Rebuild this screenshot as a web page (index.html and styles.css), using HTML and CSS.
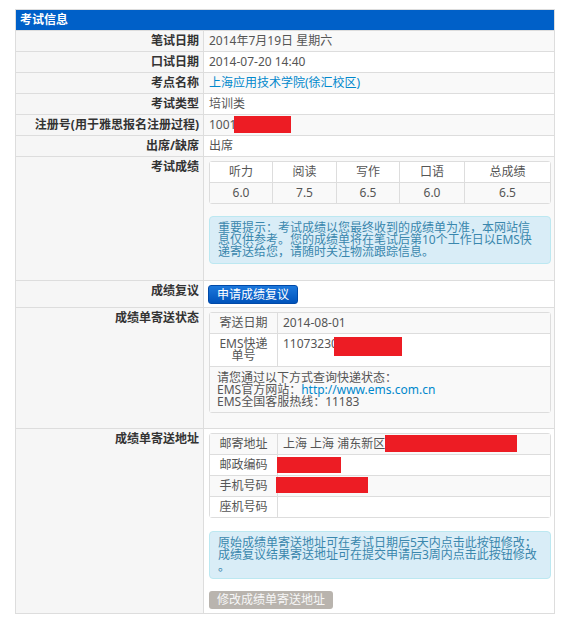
FILE: index.html
```html
<!DOCTYPE html>
<html lang="zh-CN">
<head>
<meta charset="utf-8">
<title>考试信息</title>
<link rel="stylesheet" href="styles.css">
</head>
<body>
<table class="panel">
  <colgroup><col class="c1"><col class="c2"></colgroup>
  <tr><th class="panel-head" colspan="2">考试信息</th></tr>
  <tr class="odd"><th class="lbl">笔试日期</th><td class="val">2014年7月19日 星期六</td></tr>
  <tr><th class="lbl">口试日期</th><td class="val">2014-07-20 14:40</td></tr>
  <tr class="odd"><th class="lbl">考点名称</th><td class="val"><a class="link" href="#">上海应用技术学院(徐汇校区)</a></td></tr>
  <tr><th class="lbl">考试类型</th><td class="val">培训类</td></tr>
  <tr class="odd"><th class="lbl">注册号(用于雅思报名注册过程)</th><td class="val">1001<span class="redact r-reg"></span></td></tr>
  <tr><th class="lbl">出席/缺席</th><td class="val">出席</td></tr>
  <tr class="odd"><th class="lbl">考试成绩</th>
    <td class="val">
      <table class="grid scores">
        <thead>
          <tr class="first"><th class="s1">听力</th><th class="s2">阅读</th><th class="s3">写作</th><th class="s4">口语</th><th>总成绩</th></tr>
        </thead>
        <tbody>
          <tr class="odd"><td>6.0</td><td>7.5</td><td>6.5</td><td>6.0</td><td>6.5</td></tr>
        </tbody>
      </table>
      <div class="alert">重要提示：考试成绩以您最终收到的成绩单为准，本网站信<br>息仅供参考。您的成绩单将在笔试后第10个工作日以EMS快<br>递寄送给您，请随时关注物流跟踪信息。</div>
    </td>
  </tr>
  <tr><th class="lbl">成绩复议</th><td class="val btn-cell"><a class="btn-primary" href="#">申请成绩复议</a></td></tr>
  <tr class="odd"><th class="lbl">成绩单寄送状态</th>
    <td class="val">
      <table class="grid info status">
        <tr class="odd first"><td class="k">寄送日期</td><td class="v">2014-08-01</td></tr>
        <tr><td class="k">EMS快递<br>单号</td><td class="v">11073230<span class="redact r-ems"></span></td></tr>
        <tr class="odd"><td class="note" colspan="2">请您通过以下方式查询快递状态：<br>EMS官方网站：<a class="link" href="#">http://www.ems.com.cn</a><br>EMS全国客服热线：11183</td></tr>
      </table>
    </td>
  </tr>
  <tr><th class="lbl">成绩单寄送地址</th>
    <td class="val">
      <table class="grid info address">
        <tr class="odd first"><td class="k">邮寄地址</td><td class="v">上海 上海 浦东新区<span class="redact r-addr"></span></td></tr>
        <tr><td class="k">邮政编码</td><td class="v"><span class="redact r-zip"></span></td></tr>
        <tr class="odd"><td class="k">手机号码</td><td class="v"><span class="redact r-phone"></span></td></tr>
        <tr><td class="k">座机号码</td><td class="v"></td></tr>
      </table>
      <div class="alert alert-2">原始成绩单寄送地址可在考试日期后5天内点击此按钮修改；<br>成绩复议结果寄送地址可在提交申请后3周内点击此按钮修改<br>。</div>
      <a class="btn-gray" href="#">修改成绩单寄送地址</a>
    </td>
  </tr>
</table>
</body>
</html>
```

FILE: styles.css
```css
html, body {
  background: #fff;
}
body {
  margin: 0;
  padding: 9px 0 0 15px;
  font-family: "Noto Sans", "Noto Sans CJK SC", sans-serif;
  font-size: 12px;
  line-height: 12px;
  color: #555;
}

.panel {
  width: 540px;
  border: 1px solid #ddd;
  border-collapse: separate;
  border-spacing: 0;
  table-layout: fixed;
}
.c1 { width: 188px; }
.c2 { width: 350px; }

.panel-head {
  background: #0060c8;
  color: #fff;
  font-weight: bold;
  text-align: left;
  padding: 4px 4px;
  line-height: 12px;
}

.lbl {
  box-sizing: border-box;
  border-top: 1px solid #ddd;
  border-right: 1px solid #ddd;
  background: #f6f6f6;
  text-align: right;
  vertical-align: top;
  padding: 4px 4px;
  font-weight: bold;
  color: #333;
  white-space: nowrap;
}
.val {
  border-top: 1px solid #ddd;
  padding: 4px 3px 4px 5px;
  vertical-align: top;
  text-align: left;
  background: #fff;
}
.panel > tbody > tr.odd > .val { background: #f9f9f9; }
.btn-cell { padding-bottom: 3px; }

.link {
  color: #0088cc;
  text-decoration: none;
}

/* inner bordered tables */
.grid {
  width: 342px;
  border: 1px solid #ddd;
  border-radius: 3px;
  border-collapse: separate;
  border-spacing: 0;
  table-layout: fixed;
  background: #fff;
}
.grid th, .grid td {
  box-sizing: border-box;
  border-left: 1px solid #ddd;
  border-top: 1px solid #ddd;
  padding: 4px 5px;
  line-height: 12px;
  font-weight: normal;
  color: #555;
  vertical-align: top;
  background: #fff;
}
.grid tr > :first-child { border-left: 0; }
.grid tr.first > * { border-top: 0; }
.grid tr.odd > * { background: #f9f9f9; }

.scores { margin-bottom: 12px; }
.scores th, .scores td { text-align: center; }
.s1 { width: 62px; }
.s2 { width: 64px; }
.s3 { width: 63px; }
.s4 { width: 65px; }

.info .k { width: 67px; text-align: center; }
.info .v { text-align: left; white-space: nowrap; }
.info .note { padding: 5px 7px 4px; text-align: left; }
.status { margin-bottom: 11px; }
.address { margin-bottom: 13px; }

.alert {
  background: #d9edf7;
  border: 1px solid #bce8f1;
  border-radius: 4px;
  color: #3a87ad;
  padding: 5px 8px;
  margin-bottom: 12px;
  white-space: nowrap;
}

.btn-primary {
  display: block;
  width: max-content;
  box-sizing: border-box;
  height: 19px;
  line-height: 17px;
  padding: 0 8px;
  margin-left: -1px;
  border: 1px solid #0049a8;
  border-radius: 3px;
  background: linear-gradient(#1c78dc, #0053bb);
  color: #fff;
  text-decoration: none;
}
.btn-gray {
  display: block;
  width: max-content;
  height: 18px;
  line-height: 18px;
  padding: 0 8px;
  border-radius: 3px;
  background: #b9b4ae;
  color: #f7f7f7;
  text-decoration: none;
}

/* redaction blocks */
.redact {
  display: inline-block;
  vertical-align: top;
  background: #ed1c24;
}
.r-reg { width: 57px; height: 17px; margin: -3px 0 -2px -2px; }
.r-ems { width: 68px; height: 19px; margin: -1px 0 -6px -4px; }
.r-addr { width: 132px; height: 17px; margin: -3px 0 -2px 0; }
.r-zip { width: 64px; height: 16px; margin: -2px 0 -2px -6px; }
.r-phone { width: 92px; height: 16px; margin: -3px 0 -1px -7px; }
```
